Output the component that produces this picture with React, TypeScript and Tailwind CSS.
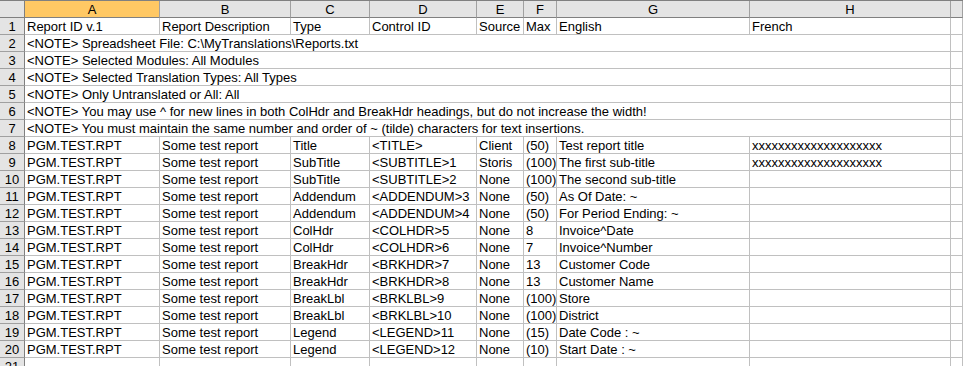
import React from "react";

const cols = ["A", "B", "C", "D", "E", "F", "G", "H", ""];

const notes = [
  "<NOTE> Spreadsheet File: C:\\MyTranslations\\Reports.txt",
  "<NOTE> Selected Modules: All Modules",
  "<NOTE> Selected Translation Types: All Types",
  "<NOTE> Only Untranslated or All: All",
  "<NOTE> You may use ^ for new lines in both ColHdr and BreakHdr headings, but do not increase the width!",
  "<NOTE> You must maintain the same number and order of ~ (tilde) characters for text insertions.",
];

const X = "xxxxxxxxxxxxxxxxxxxx";

const data: string[][] = [
  ["Title", "<TITLE>", "Client", "(50)", "Test report title", X],
  ["SubTitle", "<SUBTITLE>1", "Storis", "(100)", "The first sub-title", X],
  ["SubTitle", "<SUBTITLE>2", "None", "(100)", "The second sub-title", ""],
  ["Addendum", "<ADDENDUM>3", "None", "(50)", "As Of Date: ~", ""],
  ["Addendum", "<ADDENDUM>4", "None", "(50)", "For Period Ending: ~", ""],
  ["ColHdr", "<COLHDR>5", "None", "8", "Invoice^Date", ""],
  ["ColHdr", "<COLHDR>6", "None", "7", "Invoice^Number", ""],
  ["BreakHdr", "<BRKHDR>7", "None", "13", "Customer Code", ""],
  ["BreakHdr", "<BRKHDR>8", "None", "13", "Customer Name", ""],
  ["BreakLbl", "<BRKLBL>9", "None", "(100)", "Store", ""],
  ["BreakLbl", "<BRKLBL>10", "None", "(100)", "District", ""],
  ["Legend", "<LEGEND>11", "None", "(15)", "Date Code : ~", ""],
  ["Legend", "<LEGEND>12", "None", "(10)", "Start Date : ~", ""],
];

const gridCls =
  "grid grid-cols-[25px_135px_131px_79px_107px_47px_33px_193px_201px_1fr]";

const cell =
  "h-[17px] border-r border-b border-[#c0c0c0] bg-white pl-[2px] pt-px leading-[16px] whitespace-nowrap overflow-hidden text-black";

function RowNum({ n }: { n: number }) {
  return (
    <div className="h-[17px] border-r border-b border-r-[#808080] border-b-[#a0a0a0] bg-[#e4e4e4] pt-px text-center leading-[16px] text-black">
      {n}
    </div>
  );
}

function Row({ n, cells }: { n: number; cells: string[] }) {
  return (
    <div className={gridCls}>
      <RowNum n={n} />
      {cells.map((c, i) => (
        <div key={i} className={cell}>
          {c}
        </div>
      ))}
      <div className={cell}></div>
    </div>
  );
}

export default function App() {
  return (
    <div
      className="w-[963px] h-[366px] overflow-hidden bg-white text-[13px]"
      style={{ fontFamily: '"Liberation Sans", Arial, sans-serif' }}
    >
      <div className={gridCls + " border-t border-[#808080]"}>
        <div className="h-[17px] border-r border-b border-[#808080] bg-[#e4e4e4]"></div>
        {cols.map((c, i) => (
          <div
            key={i}
            className={
              "h-[17px] border-r border-b border-r-[#a0a0a0] border-b-[#808080] pt-px text-center leading-[16px] text-black " +
              (i === 0 ? "bg-[#ffc864]" : "bg-[#e4e4e4]")
            }
          >
            {c}
          </div>
        ))}
      </div>
      <Row
        n={1}
        cells={[
          "Report ID v.1",
          "Report Description",
          "Type",
          "Control ID",
          "Source",
          "Max",
          "English",
          "French",
        ]}
      />
      {notes.map((t, i) => (
        <div key={i} className={gridCls}>
          <RowNum n={i + 2} />
          <div className={cell + " col-span-8 overflow-visible"}>{t}</div>
          <div className={cell}></div>
        </div>
      ))}
      {data.map((r, i) => (
        <Row key={i} n={i + 8} cells={["PGM.TEST.RPT", "Some test report", ...r]} />
      ))}
      <Row n={21} cells={["", "", "", "", "", "", "", ""]} />
    </div>
  );
}
